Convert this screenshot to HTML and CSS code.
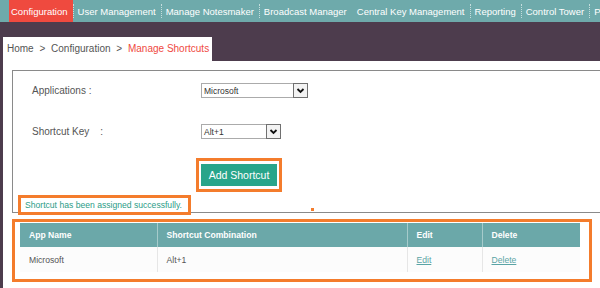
FILE: index.html
```html
<!DOCTYPE html>
<html lang="en">
<head>
    <meta charset="UTF-8">
    <meta name="viewport" content="width=device-width, initial-scale=1.0">
    <title>Manage Shortcuts</title>
    <link rel="stylesheet" href="styles.css">
</head>
<body>
    <!-- Top navigation -->
    <nav class="topnav">
        <a class="nav-item active">Configuration</a>
        <span class="sep"></span>
        <a class="nav-item">User Management</a>
        <span class="sep"></span>
        <a class="nav-item">Manage Notesmaker</a>
        <span class="sep"></span>
        <a class="nav-item">Broadcast Manager</a>
        <span class="sep blank"></span>
        <a class="nav-item">Central Key Management</a>
        <span class="sep"></span>
        <a class="nav-item">Reporting</a>
        <span class="sep"></span>
        <a class="nav-item">Control Tower</a>
        <span class="sep"></span>
        <a class="nav-item">P</a>
    </nav>

    <!-- Breadcrumb band -->
    <div class="band">
        <div class="breadcrumb">Home <span class="crumb-arrow">&gt;</span> Configuration <span class="crumb-arrow">&gt;</span> <span class="current">Manage Shortcuts</span></div>
    </div>

    <main class="content">
        <!-- Shortcut form -->
        <section class="form-box">
            <div class="field-row">
                <label class="field-label">Applications :</label>
                <div class="select select-wide">
                    <span class="select-value">Microsoft</span>
                    <span class="select-arrow">
                        <svg width="11" height="11" viewBox="0 0 11 11"><path d="M2.5 4 L5.5 7 L8.5 4" fill="none" stroke="#111" stroke-width="1.8"/></svg>
                    </span>
                </div>
            </div>
            <div class="field-row">
                <label class="field-label">Shortcut Key&nbsp;&nbsp;&nbsp;&nbsp;:</label>
                <div class="select select-narrow">
                    <span class="select-value">Alt+1</span>
                    <span class="select-arrow">
                        <svg width="11" height="11" viewBox="0 0 11 11"><path d="M2.5 4 L5.5 7 L8.5 4" fill="none" stroke="#111" stroke-width="1.8"/></svg>
                    </span>
                </div>
            </div>
            <div class="actions">
                <div class="highlight btn-frame">
                    <button class="btn-add">Add Shortcut</button>
                </div>
            </div>
            <p class="highlight message">Shortcut has been assigned successfully.</p>
            <span class="marker"></span>
        </section>

        <!-- Shortcut list -->
        <section class="highlight table-wrap">
            <table class="shortcut-table">
                <colgroup>
                    <col class="col-app">
                    <col class="col-combo">
                    <col class="col-edit">
                    <col class="col-delete">
                </colgroup>
                <thead>
                    <tr>
                        <th>App Name</th>
                        <th>Shortcut Combination</th>
                        <th>Edit</th>
                        <th>Delete</th>
                    </tr>
                </thead>
                <tbody>
                    <tr>
                        <td>Microsoft</td>
                        <td>Alt+1</td>
                        <td><a class="link">Edit</a></td>
                        <td><a class="link">Delete</a></td>
                    </tr>
                </tbody>
            </table>
        </section>
    </main>
</body>
</html>
```

FILE: styles.css
```css
/* General page settings */
body {
    margin: 0;
    background: #4d3c4d;
    font-family: "Liberation Sans", Arial, sans-serif;
    overflow: hidden;
}

/* Top navigation bar */
.topnav {
    display: flex;
    height: 22px;
    padding-left: 9px;
    background: #6eaaab;
    white-space: nowrap;
    overflow: hidden;
}

.nav-item {
    display: flex;
    align-items: center;
    padding: 0 5px 0 4px;
    color: #fff;
    font-size: 9.5px;
    text-decoration: none;
}

.nav-item.active {
    background: #ef4a3f;
    padding-left: 2px;
}

.sep {
    align-self: center;
    height: 14px;
    border-left: 1px dotted rgba(255, 255, 255, 0.6);
}

.sep.blank {
    border-left-color: transparent;
}

/* Breadcrumb band */
.band {
    display: flex;
    align-items: flex-end;
    height: 39px;
    padding-left: 3px;
}

.breadcrumb {
    width: 209px;
    height: 24px;
    box-sizing: border-box;
    padding-left: 4px;
    background: #fff;
    font-size: 10px;
    line-height: 24px;
    color: #555;
    white-space: nowrap;
}

.crumb-arrow {
    margin: 0 3px;
}

.breadcrumb .current {
    color: #ef4a3f;
}

/* White content area */
.content {
    height: 227px;
    box-sizing: border-box;
    margin-left: 3px;
    padding-top: 9px;
    background: #fff;
}

/* Form box */
.form-box {
    position: relative;
    margin-left: 9px;
    padding: 12px 0 0 19px;
    border: 1px solid #8a8a8a;
    border-right: 0;
}

.field-row {
    display: flex;
    align-items: center;
    height: 15px;
}

.field-row + .field-row {
    margin-top: 26px;
}

.field-label {
    width: 169px;
    font-size: 10px;
    color: #555;
}

/* Fake dropdowns */
.select {
    display: flex;
    align-items: center;
    height: 15px;
    box-sizing: border-box;
    border: 1px solid #ababab;
    background: #fff;
}

.select-wide {
    width: 107px;
}

.select-narrow {
    width: 80px;
}

.select-value {
    padding-left: 2px;
    font-size: 8.5px;
    color: #333;
}

.select-arrow {
    display: flex;
    align-items: center;
    justify-content: center;
    width: 15px;
    height: 15px;
    box-sizing: border-box;
    margin: -1px -1px -1px auto;
    border: 1px solid #707070;
    background: #f3f3f3;
}

/* Orange annotation boxes */
.highlight {
    border: 3px solid #f47c2c;
}

.actions {
    display: flex;
    margin-top: 19px;
    padding-left: 164px;
}

.btn-frame {
    display: flex;
    padding: 3px 2px;
}

.btn-add {
    width: 76px;
    height: 22px;
    padding: 0;
    border: 0;
    background: #28a58a;
    color: #fff;
    font-family: "Liberation Sans", Arial, sans-serif;
    font-size: 10.5px;
}

.message {
    width: 173px;
    height: 20px;
    box-sizing: border-box;
    margin: 3px 0 -3px -14px;
    padding: 0 4px;
    font-size: 8.6px;
    line-height: 14px;
    color: #2c9c87;
}

.marker {
    position: absolute;
    left: 298px;
    top: 137px;
    width: 3px;
    height: 3px;
    background: #f47c2c;
}

/* Shortcut table */
.table-wrap {
    margin: 6px 8px 0 9px;
    padding: 1px 9px 7px 5px;
}

.shortcut-table {
    width: 560px;
    border-collapse: collapse;
    table-layout: fixed;
    font-size: 8.6px;
}

.col-app { width: 137px; }
.col-combo { width: 250px; }
.col-edit { width: 75px; }
.col-delete { width: 98px; }

.shortcut-table th {
    height: 24px;
    padding: 0 0 0 9px;
    background: #6ba8a9;
    color: #fff;
    text-align: left;
    border-left: 1px solid #a6cbcb;
}

.shortcut-table td {
    height: 25px;
    padding: 0 0 0 9px;
    background: #fcfcfc;
    color: #555;
    border-left: 1px solid #e6e6e6;
}

.shortcut-table th:first-child,
.shortcut-table td:first-child {
    border-left: 0;
}

.link {
    color: #5aa4a5;
    text-decoration: underline;
}
```
